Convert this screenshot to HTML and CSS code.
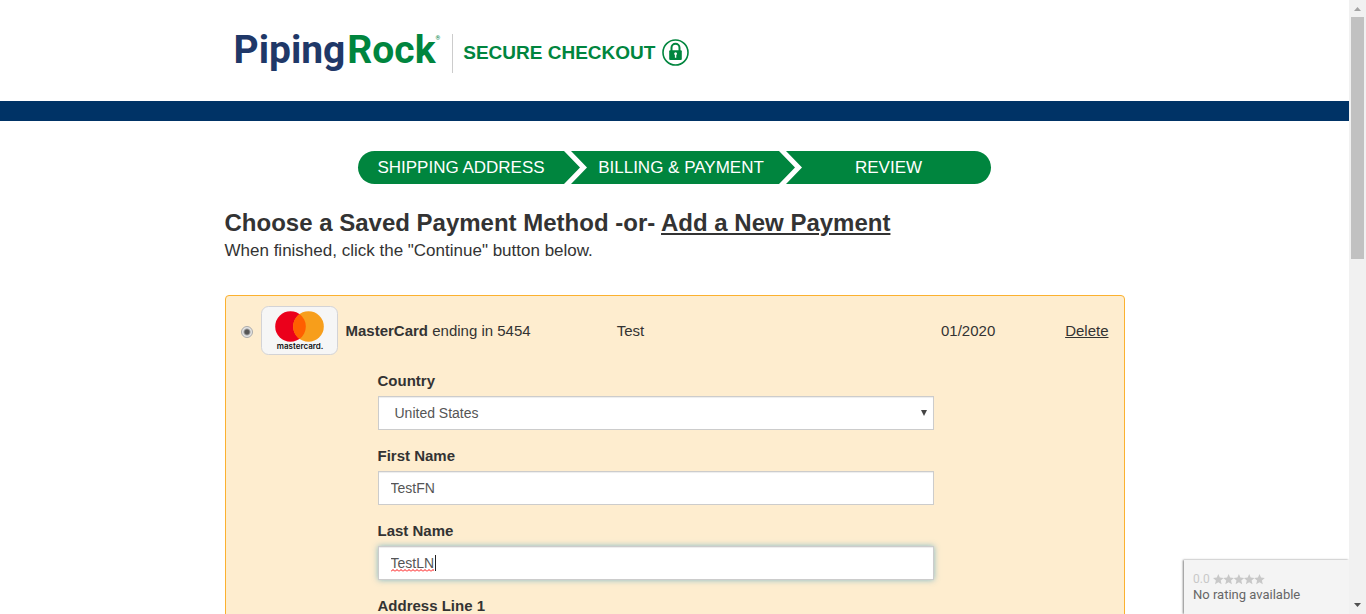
FILE: index.html
```html
<!DOCTYPE html>
<html lang="en">
<head>
<meta charset="utf-8">
<title>Secure Checkout - PipingRock</title>
<link rel="stylesheet" href="styles.css">
</head>
<body>
<div class="viewport">
  <div class="page">
    <header class="header">
      <div class="container header-inner">
        <a class="brand" href="#"><span class="brand-piping">Piping</span><span class="brand-rock">Rock</span><span class="brand-mark">®</span></a>
        <div class="secure">
          <span>SECURE CHECKOUT</span>
          <svg class="lock" viewBox="0 0 27 27" aria-hidden="true">
            <circle cx="13.5" cy="13.5" r="12.500" fill="none" stroke="#00853e" stroke-width="1.600"/>
            <path d="M9.500 12V8.800a4 4 0 0 1 8 0V12" fill="none" stroke="#00853e" stroke-width="2"/>
            <rect x="7.200" y="11.300" width="12.600" height="9.600" rx="1" fill="#00853e"/>
            <path d="M12.900 18.700v-2.800a1.400 1.400 0 1 1 1.400 0v2.800z" fill="#fff"/>
          </svg>
        </div>
      </div>
    </header>
    <div class="band"></div>
    <main class="container main">
      <nav class="steps" aria-label="Checkout steps">
        <a class="step step-first" href="#">SHIPPING ADDRESS</a>
        <svg class="chevron" viewBox="0 0 23 33" aria-hidden="true"><path d="M0 0h7l16 16.500L7 33H0l16-16.500z" fill="#fff"/></svg>
        <a class="step step-billing" href="#">BILLING &amp; PAYMENT</a>
        <svg class="chevron" viewBox="0 0 23 33" aria-hidden="true"><path d="M0 0h7l16 16.500L7 33H0l16-16.500z" fill="#fff"/></svg>
        <a class="step step-review" href="#">REVIEW</a>
      </nav>
      <h1 class="title">Choose a Saved Payment Method -or- <a href="#">Add a New Payment</a></h1>
      <p class="subtitle">When finished, click the "Continue" button below.</p>

      <form class="card">
        <div class="card-row">
          <input class="radio" type="radio" name="payment" id="pay1" checked>
          <svg class="card-logo" viewBox="0 0 77 49" aria-hidden="true">
            <rect x=".5" y=".5" width="76" height="48" rx="7" fill="#f6f6f6" stroke="#d3d3d6"/>
            <circle cx="29.500" cy="20.500" r="15.300" fill="#eb001b"/>
            <circle cx="47.500" cy="20.500" r="15.300" fill="#f79e1b"/>
            <path d="M38.500 8.100a15.300 15.300 0 0 1 0 24.800a15.300 15.300 0 0 1 0-24.800z" fill="#ff5f00"/>
            <text x="39" y="43" text-anchor="middle" class="card-logo-text">mastercard.</text>
          </svg>
          <label class="card-name" for="pay1"><strong>MasterCard</strong> ending in 5454</label>
          <span>Test</span>
          <span>01/2020</span>
          <a class="delete" href="#">Delete</a>
        </div>
        <div class="fields">
          <div class="field">
            <label for="country">Country</label>
            <div class="control-wrap">
              <select class="control select" id="country"><option>United States</option></select>
              <svg class="arrow" viewBox="0 0 6 6" aria-hidden="true"><path d="M0 0h6L3 6z" fill="#444"/></svg>
            </div>
          </div>
          <div class="field">
            <label for="first">First Name</label>
            <input class="control" id="first" type="text" value="TestFN">
          </div>
          <div class="field">
            <label for="last">Last Name</label>
            <div class="control-wrap">
              <input class="control control-active" id="last" type="text" value="TestLN">
              <svg class="squiggle" viewBox="0 0 43 3" aria-hidden="true">
                <defs><pattern id="wave" width="4" height="3" patternUnits="userSpaceOnUse"><path d="M0 2.500l2-2 2 2" fill="none" stroke="#f00" stroke-width="1"/></pattern></defs>
                <rect width="43" height="3" fill="url(#wave)"/>
              </svg>
              <span class="caret"></span>
            </div>
          </div>
          <div class="field">
            <label for="address">Address Line 1</label>
            <input class="control" id="address" type="text">
          </div>
        </div>
      </form>
    </main>
    <aside class="rating">
      <div class="rating-score">0.0
        <svg class="stars" viewBox="0 0 52 11" aria-hidden="true">
          <defs><path id="star" d="M5.300 0l1.500 3.600 3.800.3-2.900 2.500.9 3.800-3.300-2-3.300 2 .9-3.800L0 3.900l3.800-.3z" fill="#c8c8c8"/></defs>
          <use href="#star"/><use href="#star" x="10.300"/><use href="#star" x="20.600"/><use href="#star" x="30.900"/><use href="#star" x="41.200"/>
        </svg>
      </div>
      <div>No rating available</div>
    </aside>
  </div>
  <div class="scrollbar" aria-hidden="true">
    <svg class="scroll-arrow" viewBox="0 0 17 17"><path d="M8.500 7L12 11H5z" fill="#a3a3a3"/></svg>
    <div class="track"><div class="thumb"></div></div>
    <svg class="scroll-arrow" viewBox="0 0 17 17"><path d="M5 6h7l-3.500 4z" fill="#505050"/></svg>
  </div>
</div>
</body>
</html>
```
FILE: styles.css
```css
* { box-sizing: border-box; }
body {
  margin: 0;
  background: #fff;
  color: #333;
  font: 15px/21px "Liberation Sans", Arial, sans-serif;
}
a { color: inherit; }
.viewport { display: flex; height: 100vh; overflow: hidden; }
.page { position: relative; flex: 1; min-width: 0; overflow: hidden; }
.container { max-width: 900px; margin: 0 auto; }

.header { padding: 34px 0 28px; }
.header-inner { display: flex; height: 39px; }
.brand {
  display: flex;
  padding-left: 9px;
  font: bold 39px/33px Roboto, sans-serif;
  text-decoration: none;
}
.brand-piping { color: #1f3868; }
.brand-rock { margin-left: 2px; color: #00853e; }
.brand-mark { color: #00853e; font-size: 6px; line-height: 8px; }
.secure {
  display: flex;
  align-items: center;
  gap: 7px;
  margin-left: 12px;
  padding: 0 0 3px 10px;
  border-left: 1px solid #ccc;
  color: #00853e;
  font-size: 19px;
  font-weight: bold;
}
.lock { width: 27px; height: 27px; }
.band { height: 20px; background: #036; }

.main { padding-top: 30px; }
.steps {
  display: grid;
  grid-template-columns: 206fr 23px 192fr 23px 189fr;
  max-width: 633px;
  height: 33px;
  margin: 0 auto;
  overflow: hidden;
  border-radius: 17px;
  background: #00853e;
  color: #fff;
  font-size: 17px;
  line-height: 33px;
  text-align: center;
}
.step { text-decoration: none; white-space: nowrap; }
.step-billing { padding-right: 4px; }
.step-review { padding-right: 16px; }
.chevron { width: 23px; height: 33px; }

.title { margin: 24px 0 0; font-size: 24px; line-height: 30px; }
.subtitle { margin: 0 0 32px; font-size: 17px; line-height: 25px; }

.card {
  height: 400px;
  padding: 10px 15px;
  border: 1px solid #fbb12f;
  border-radius: 4px;
  background: #feedcf;
}
.card-row {
  display: grid;
  grid-template-columns: 20px 85px 271fr 324fr 124fr auto;
  align-items: center;
}
.card-logo { width: 77px; height: 49px; }
.card-logo-text { font: 600 8px Inter, sans-serif; fill: #111; }
.radio {
  appearance: none;
  width: 12px;
  height: 12px;
  margin: 3px 0 0;
  border: 1px solid #aaa;
  border-radius: 50%;
  background: radial-gradient(circle, #555 0 2px, #e4e4e4 4px);
}
.fields { max-width: 556px; margin: 15px 0 0 137px; }
.field { margin-bottom: 15px; }
.field label { display: block; margin-bottom: 5px; font-weight: bold; }
.control {
  display: block;
  width: 100%;
  height: 34px;
  padding: 6px 12px;
  border: 1px solid #ccc;
  border-radius: 0;
  outline: 0;
  background: #fff;
  box-shadow: inset 0 1px 1px rgba(0, 0, 0, .075);
  color: #555;
  font: 14px/20px "Liberation Sans", Arial, sans-serif;
}
.select { appearance: none; padding-left: 16px; }
.control-wrap { position: relative; }
.arrow { position: absolute; top: 14px; right: 7px; width: 6px; height: 6px; }
.control-active {
  box-shadow: inset 0 1px 1px rgba(0, 0, 0, .075), 0 0 6px rgba(102, 175, 200, .8);
}
.squiggle { position: absolute; top: 23px; left: 13px; width: 43px; height: 3px; }
.caret { position: absolute; top: 9px; left: 57px; width: 1px; height: 16px; background: #222; }

.rating {
  position: absolute;
  right: 0;
  bottom: 0;
  width: 165px;
  height: 54px;
  padding: 12px 9px;
  background: #f4f4f4;
  box-shadow: -1px 0 2px rgba(0, 0, 0, .5);
  color: #666;
  font: 13px/15px Roboto, sans-serif;
}
.rating-score { display: flex; align-items: center; gap: 3px; color: #c8c8c8; font-size: 12px; }
.stars { width: 52px; height: 11px; }

.scrollbar { display: flex; flex-direction: column; width: 17px; background: #f1f1f1; }
.scroll-arrow { width: 17px; height: 17px; }
.track { flex: 1; padding: 0 2px; }
.thumb { height: 242px; background: #c1c1c1; }
```
